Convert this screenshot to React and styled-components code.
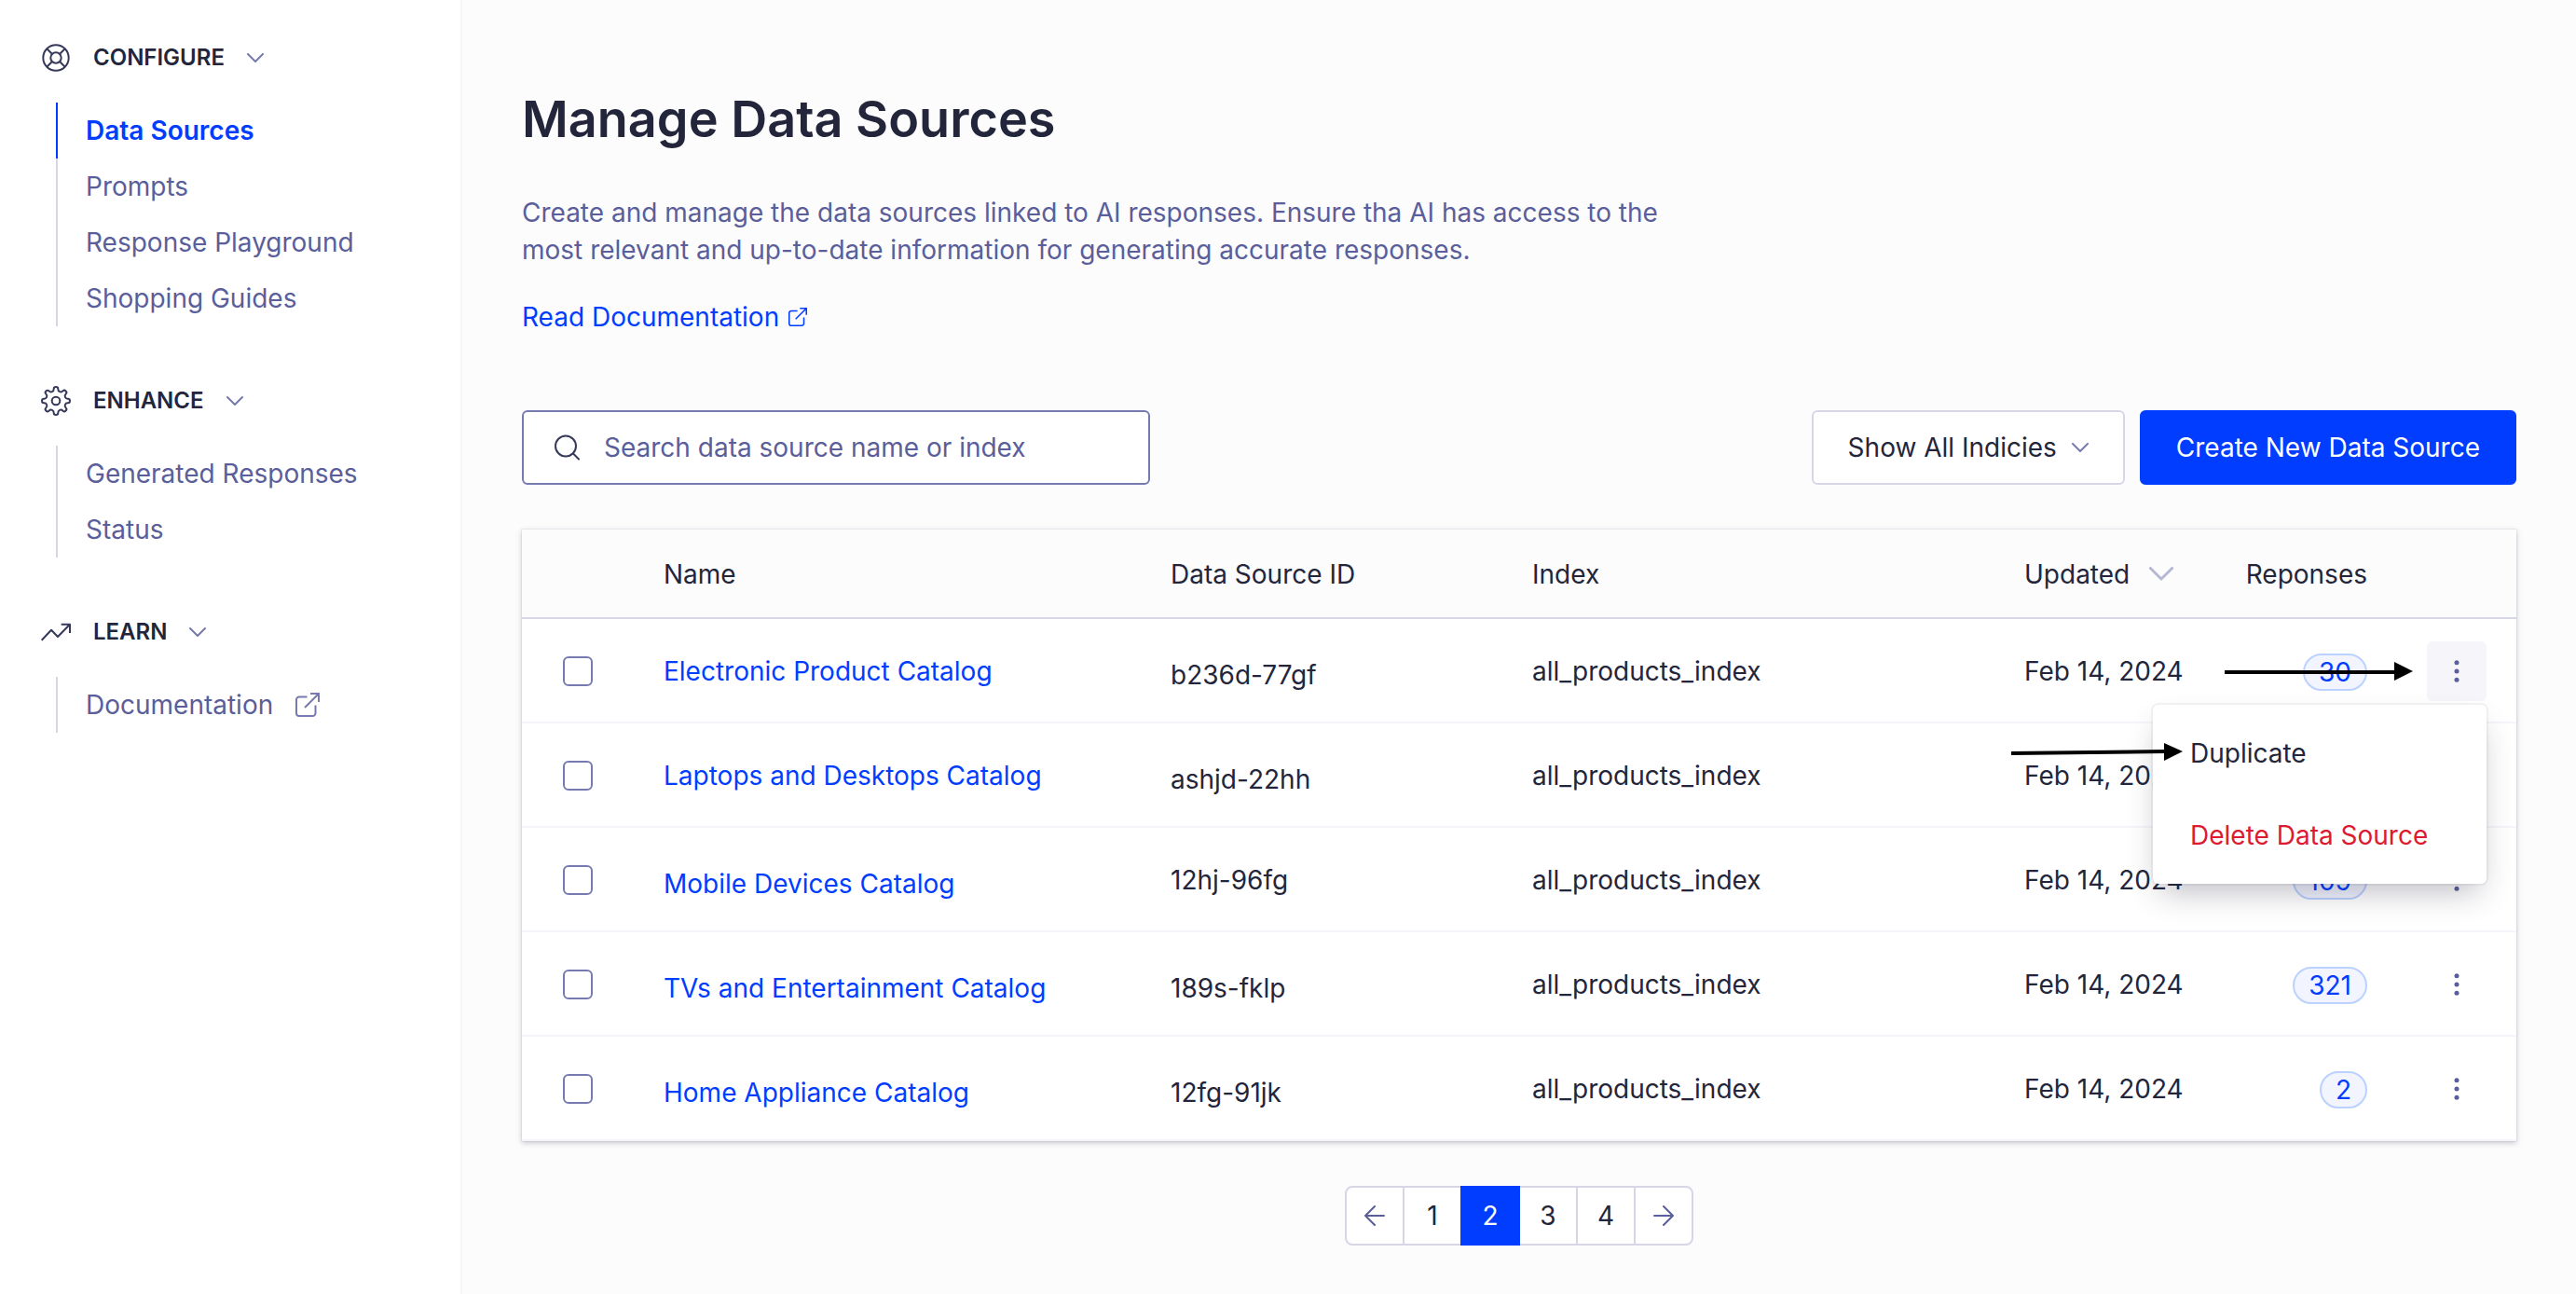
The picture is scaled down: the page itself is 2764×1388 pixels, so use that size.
import React from "react";
import styled, { createGlobalStyle, css } from "styled-components";

const sections = [
  {
    title: "Configure",
    icon: "support",
    links: [
      { label: "Data Sources", active: true },
      { label: "Prompts" },
      { label: "Response Playground" },
      { label: "Shopping Guides" },
    ],
  },
  {
    title: "Enhance",
    icon: "gear",
    links: [{ label: "Generated Responses" }, { label: "Status" }],
  },
  {
    title: "Learn",
    icon: "trend",
    links: [{ label: "Documentation", external: true }],
  },
];

const sources = [
  { name: "Electronic Product Catalog", id: "b236d-77gf", responses: 30, lowId: true, open: true },
  { name: "Laptops and Desktops Catalog", id: "ashjd-22hh", responses: 105, lowId: true },
  { name: "Mobile Devices Catalog", id: "12hj-96fg", responses: 109, lowName: true },
  { name: "TVs and Entertainment Catalog", id: "189s-fklp", responses: 321, lowName: true, lowId: true },
  { name: "Home Appliance Catalog", id: "12fg-91jk", responses: 2, lowName: true, lowId: true },
];

const icons = {
  support: (
    <>
      <circle cx="16" cy="16" r="13.7" />
      <circle cx="16" cy="16" r="5.7" />
      <path d="M6.3 6.3l5.7 5.7M20 20l5.7 5.7M25.7 6.3L20 12M12 20l-5.7 5.7" />
    </>
  ),
  gear: (
    <>
      <circle cx="16" cy="16" r="4.3" />
      <path d="M13.7 3.3A2.3 2.3 0 0 1 18.3 3.3A2.9 2.9 0 0 0 23.35 5.39A2.3 2.3 0 0 1 26.61 8.65A2.9 2.9 0 0 0 28.7 13.7A2.3 2.3 0 0 1 28.7 18.3A2.9 2.9 0 0 0 26.61 23.35A2.3 2.3 0 0 1 23.35 26.61A2.9 2.9 0 0 0 18.3 28.7A2.3 2.3 0 0 1 13.7 28.7A2.9 2.9 0 0 0 8.65 26.61A2.3 2.3 0 0 1 5.39 23.35A2.9 2.9 0 0 0 3.3 18.3A2.3 2.3 0 0 1 3.3 13.7A2.9 2.9 0 0 0 5.39 8.65A2.3 2.3 0 0 1 8.65 5.39A2.9 2.9 0 0 0 13.7 3.3Z" />
    </>
  ),
  trend: <path d="M.7 24.7L11 13.7l7 7.3L30.7 8M21.7 7.7H31V17" />,
};

const Chevron = ({ size = 18, color = "#777aaf", stroke = 2 }) => (
  <svg width={size} height={size / 2 + 2} viewBox="0 0 18 11" fill="none" stroke={color} strokeWidth={stroke} strokeLinecap="round" strokeLinejoin="round" aria-hidden="true">
    <path d="M1 1l8 8 8-8" />
  </svg>
);

const External = ({ size = 26 }) => (
  <svg width={size} height={size} viewBox="0 0 26 26" fill="none" stroke="currentColor" strokeWidth="2" aria-hidden="true">
    <path d="M12.5 4.5H4a3 3 0 0 0-3 3V22a3 3 0 0 0 3 3h14.500a3 3 0 0 0 3-3v-8.500M10 16L25 1M16 1h9v9" />
  </svg>
);

const PageArrow = ({ next }) => (
  <svg width="22" height="22" viewBox="0 0 22 22" fill="none" stroke="#5a5e9a" strokeWidth="2" strokeLinecap="round" strokeLinejoin="round" aria-hidden="true">
    <path d={next ? "M1 11h20M11 1l10 10-10 10" : "M21 11H1M11 1L1 11l10 10"} />
  </svg>
);

const Dots = () => (
  <svg width="6" height="26" viewBox="0 0 6 26" fill="#5a5e9a" aria-hidden="true">
    <circle cx="3" cy="3.700" r="2.500" />
    <circle cx="3" cy="13" r="2.500" />
    <circle cx="3" cy="22.300" r="2.500" />
  </svg>
);

const Row = ({ source }) => (
  <tr>
    <Td $check>
      <Checkbox type="checkbox" aria-label={`Select ${source.name}`} />
    </Td>
    <Td $low={source.lowName}>
      <Link href="#">{source.name}</Link>
    </Td>
    <Td $low={source.lowId}>{source.id}</Td>
    <Td>all_products_index</Td>
    <Td>Feb 14, 2024</Td>
    <Td $right>
      <Chip>{source.responses}</Chip>
    </Td>
    <Td $right $actions>
      <Actions>
        <MoreButton type="button" aria-label={`Actions for ${source.name}`} $open={source.open}>
          <Dots />
        </MoreButton>
        {source.open && (
          <>
            <Menu role="menu">
              <MenuItem type="button" role="menuitem">Duplicate</MenuItem>
              <MenuItem type="button" role="menuitem" $danger>Delete Data Source</MenuItem>
            </Menu>
            <Pointers viewBox="0 0 432 140" aria-hidden="true">
              <path d="M229 33H413" stroke="#000" strokeWidth="4" />
              <path d="M411 22l20 10-20 10z" />
              <path d="M0 120L166 118" stroke="#000" strokeWidth="4" />
              <path d="M164 109l20 9-20 10z" />
            </Pointers>
          </>
        )}
      </Actions>
    </Td>
  </tr>
);

const App = () => {
  return (
    <Page>
      <GlobalStyle />
      <Sidebar>
        {sections.map((section) => (
          <section key={section.title}>
            <SectionButton type="button">
              <SectionIcon viewBox="0 0 32 32">{icons[section.icon]}</SectionIcon>
              {section.title}
              <Chevron />
            </SectionButton>
            <NavList>
              {section.links.map((link) => (
                <li key={link.label}>
                  <NavLink href="#" $active={link.active}>
                    {link.label}
                    {link.external && <External />}
                  </NavLink>
                </li>
              ))}
            </NavList>
          </section>
        ))}
      </Sidebar>
      <Main>
        <Title>Manage Data Sources</Title>
        <Intro>
          Create and manage the data sources linked to AI responses. Ensure tha AI has access to the
          most relevant and up-to-date information for generating accurate responses.
        </Intro>
        <DocLink href="#">
          Read Documentation
          <External size={20} />
        </DocLink>
        <Toolbar>
          <SearchBox>
            <svg width="28" height="28" viewBox="0 0 28 28" fill="none" stroke="#36395a" strokeWidth="2" strokeLinecap="round" aria-hidden="true">
              <circle cx="13" cy="12.500" r="11" />
              <path d="M21 20.500l6 6" />
            </svg>
            <SearchInput type="search" aria-label="Search data sources" placeholder="Search data source name or index" />
          </SearchBox>
          <Button type="button">
            Show All Indicies
            <Chevron />
          </Button>
          <Button type="button" $primary>Create New Data Source</Button>
        </Toolbar>
        <Table>
          <colgroup>
            <Col $width={152} />
            <Col $width={544} />
            <Col $width={388} />
            <Col />
            <Col $width={208} />
            <Col $width={160} />
            <Col $width={160} />
          </colgroup>
          <thead>
            <tr>
              <Th aria-label="Select" />
              <Th>Name</Th>
              <Th>Data Source ID</Th>
              <Th>Index</Th>
              <Th>
                <SortButton type="button">
                  Updated
                  <Chevron size={28} color="#b6b7d5" />
                </SortButton>
              </Th>
              <Th $right>Reponses</Th>
              <Th aria-label="Actions" />
            </tr>
          </thead>
          <tbody>
            {sources.map((source) => (
              <Row key={source.id} source={source} />
            ))}
          </tbody>
        </Table>
        <Pagination aria-label="Pagination">
          <PageButton type="button" aria-label="Previous page"><PageArrow /></PageButton>
          {[1, 2, 3, 4].map((page) => (
            <PageButton type="button" key={page} $current={page === 2}>{page}</PageButton>
          ))}
          <PageButton type="button" aria-label="Next page"><PageArrow next /></PageButton>
        </Pagination>
      </Main>
    </Page>
  );
};

const GlobalStyle = createGlobalStyle`
  * {
    box-sizing: border-box;
  }
  body {
    margin: 0;
    background: #fcfcfd;
    color: #23263b;
    font: 400 28px/40px Inter, "Liberation Sans", sans-serif;
  }
  button, input {
    font: inherit;
    color: inherit;
  }
  button {
    cursor: pointer;
  }
`;

const Page = styled.div`
  display: flex;
  min-height: 100vh;
`;

const Sidebar = styled.nav`
  display: flex;
  flex: 0 0 496px;
  flex-direction: column;
  gap: 64px;
  padding: 46px 44px;
  background: #fff;
  border-right: 2px solid #f5f5fa;
`;

const SectionButton = styled.button`
  display: flex;
  align-items: center;
  gap: 24px;
  margin-bottom: 32px;
  padding: 0;
  border: 0;
  background: none;
  font-size: 24px;
  font-weight: 600;
  line-height: 32px;
  text-transform: uppercase;
`;

const SectionIcon = styled.svg`
  width: 32px;
  height: 32px;
  fill: none;
  stroke: #36395a;
  stroke-width: 2;
  stroke-linejoin: round;
`;

const NavList = styled.ul`
  margin: 0 0 0 16px;
  padding: 0;
  list-style: none;
`;

const NavLink = styled.a`
  display: flex;
  align-items: center;
  gap: 24px;
  height: 60px;
  padding-left: 30px;
  border-left: 2px solid #d6d6e7;
  color: #5a5e9a;
  text-decoration: none;

  svg {
    color: #777aaf;
  }

  ${(props) =>
    props.$active &&
    css`
      border-color: #003dff;
      color: #003dff;
      font-weight: 600;
    `}
`;

const Main = styled.main`
  display: flex;
  flex: 1;
  flex-direction: column;
  align-items: flex-start;
  min-width: 0;
  padding: 96px 64px 52px;
`;

const Title = styled.h1`
  margin: 0 0 48px;
  font-size: 54px;
  font-weight: 600;
  line-height: 64px;
`;

const Intro = styled.p`
  max-width: 1280px;
  margin: 0 0 32px;
  color: #5a5e9a;
`;

const Link = styled.a`
  color: #003dff;
  text-decoration: none;
`;

const DocLink = styled(Link)`
  display: flex;
  align-items: center;
  gap: 10px;
  margin-bottom: 80px;
`;

const Toolbar = styled.div`
  display: flex;
  align-self: stretch;
  gap: 16px;
  margin-bottom: 48px;
`;

const SearchBox = styled.label`
  display: flex;
  align-items: center;
  gap: 26px;
  width: 674px;
  height: 80px;
  margin-right: auto;
  padding: 0 32px;
  background: #fff;
  border: 2px solid #777aaf;
  border-radius: 6px;
`;

const SearchInput = styled.input`
  flex: 1;
  min-width: 0;
  padding: 0;
  border: 0;
  outline: 0;
  background: none;

  &::placeholder {
    color: #5a5e9a;
    opacity: 1;
  }
`;

const Button = styled.button`
  display: flex;
  align-items: center;
  gap: 16px;
  height: 80px;
  padding: 0 37px;
  background: ${(props) => (props.$primary ? "#003dff" : "#fff")};
  border: 2px solid ${(props) => (props.$primary ? "#003dff" : "#d6d6e7")};
  border-radius: 6px;
  color: ${(props) => (props.$primary ? "#fff" : "#23263b")};
  white-space: nowrap;
`;

const Table = styled.table`
  width: 100%;
  margin-bottom: 48px;
  table-layout: fixed;
  border-collapse: collapse;
  background: #fff;
  box-shadow: 0 0 0 1px rgba(35, 38, 59, 0.05), 0 2px 6px rgba(35, 38, 59, 0.25);
`;

const Col = styled.col`
  width: ${(props) => (props.$width ? `${props.$width}px` : "auto")};
`;

const Th = styled.th`
  height: 96px;
  padding: 0;
  background: #fcfcfd;
  box-shadow: inset 0 -2px 0 #d6d6e7;
  font-weight: 400;
  text-align: ${(props) => (props.$right ? "right" : "left")};
`;

const SortButton = styled.button`
  display: flex;
  align-items: center;
  gap: 20px;
  padding: 0;
  border: 0;
  background: none;
`;

const Td = styled.td`
  height: 112px;
  padding: ${(props) => (props.$low ? "8px 0 0" : "0")};
  box-shadow: inset 0 -2px 0 #f5f5fa;
  text-align: ${(props) => (props.$right ? "right" : "left")};

  ${(props) =>
    props.$check &&
    css`
      padding-left: 44px;
    `}

  ${(props) =>
    props.$actions &&
    css`
      padding-right: 32px;
    `}
`;

const Checkbox = styled.input`
  display: block;
  width: 32px;
  height: 32px;
  margin: 0;
  appearance: none;
  background: #fff;
  border: 2px solid #777aaf;
  border-radius: 6px;
`;

const Chip = styled.span`
  display: inline-block;
  height: 40px;
  padding: 0 15px;
  background: #f2f4ff;
  border: 2px solid #bbd1ff;
  border-radius: 20px;
  color: #003dff;
  line-height: 36px;
  vertical-align: middle;
`;

const Actions = styled.div`
  position: relative;
  display: flex;
  justify-content: flex-end;
`;

const MoreButton = styled.button`
  display: flex;
  align-items: center;
  justify-content: center;
  width: 64px;
  height: 64px;
  padding: 0;
  border: 0;
  border-radius: 6px;
  background: ${(props) => (props.$open ? "#f5f5fa" : "none")};
`;

const Menu = styled.div`
  position: absolute;
  z-index: 1;
  top: 68px;
  right: 0;
  width: 358px;
  padding: 8px 0;
  background: #fff;
  border-radius: 6px;
  box-shadow: 0 0 0 2px rgba(35, 38, 59, 0.05), 0 16px 32px -8px rgba(35, 38, 59, 0.3);
`;

const MenuItem = styled.button`
  display: block;
  width: 100%;
  height: 88px;
  padding: 0 40px;
  border: 0;
  background: none;
  color: ${(props) => (props.$danger ? "#dc1a31" : "#23263b")};
  text-align: left;
  white-space: nowrap;
`;

/* arrows that lead to the open menu and its first item */
const Pointers = styled.svg`
  position: absolute;
  z-index: 2;
  top: 0;
  right: 78px;
  width: 432px;
  height: 140px;
  pointer-events: none;
`;

const Pagination = styled.nav`
  display: flex;
  align-self: center;
`;

const PageButton = styled.button`
  display: flex;
  align-items: center;
  justify-content: center;
  width: 64px;
  height: 64px;
  padding: 0;
  background: #fff;
  border: 2px solid #d6d6e7;

  & + & {
    margin-left: -2px;
  }
  &:first-child {
    border-radius: 8px 0 0 8px;
  }
  &:last-child {
    border-radius: 0 8px 8px 0;
  }

  ${(props) =>
    props.$current &&
    css`
      z-index: 1;
      background: #003dff;
      border-color: #003dff;
      color: #fff;
    `}
`;

export default App;
